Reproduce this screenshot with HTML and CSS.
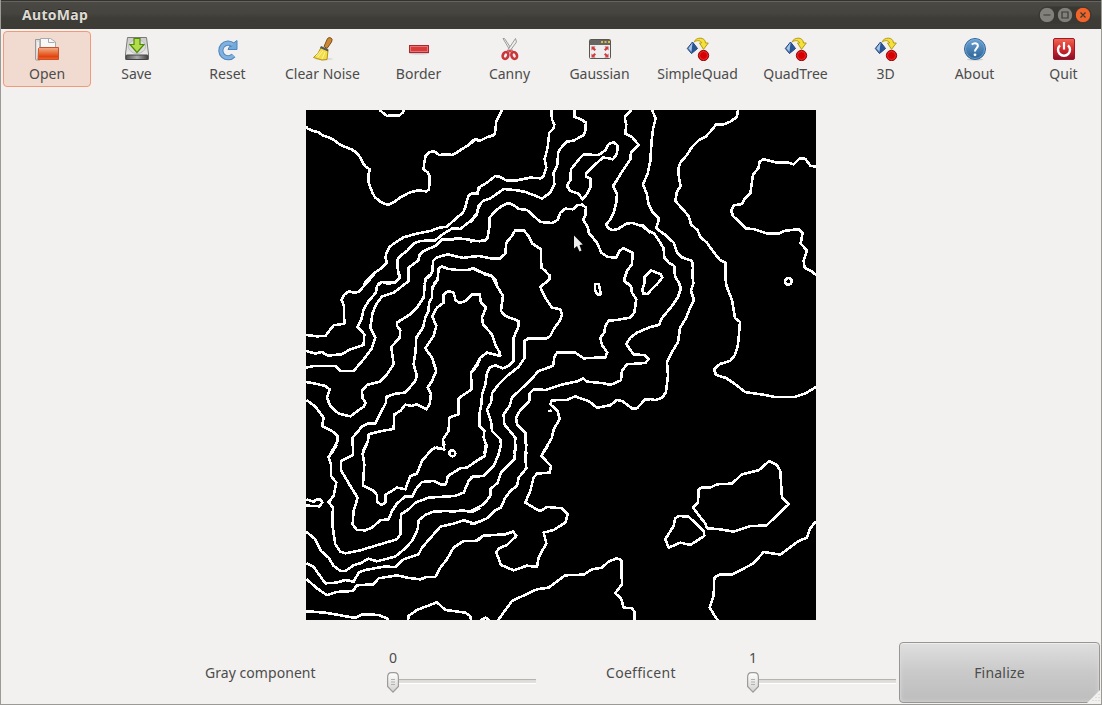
FILE: index.html
```html
<!DOCTYPE html>
<html lang="en">
<head>
<meta charset="utf-8">
<title>AutoMap</title>
<link rel="stylesheet" href="styles.css">
</head>
<body>
<svg class="defs" aria-hidden="true">
  <defs>
    <linearGradient id="orange" x1="0" y1="0" x2="0" y2="1"><stop offset="0" stop-color="#f2b08c"/><stop offset=".45" stop-color="#e9703c"/><stop offset=".75" stop-color="#e2430f"/><stop offset="1" stop-color="#f0672e"/></linearGradient>
    <linearGradient id="steel" x1="0" y1="0" x2="0" y2="1"><stop offset="0" stop-color="#c9cac7"/><stop offset="1" stop-color="#f4f4f2"/></linearGradient>
    <linearGradient id="dark" x1="0" y1="0" x2="1" y2="0"><stop offset="0" stop-color="#555"/><stop offset=".5" stop-color="#aaa"/><stop offset="1" stop-color="#444"/></linearGradient>
    <linearGradient id="blue" x1="0" y1="0" x2="0" y2="1"><stop offset="0" stop-color="#6fa3d4"/><stop offset="1" stop-color="#296396"/></linearGradient>
    <linearGradient id="red" x1="0" y1="0" x2="0" y2="1"><stop offset="0" stop-color="#ee6a55"/><stop offset=".5" stop-color="#d6282c"/><stop offset="1" stop-color="#83102c"/></linearGradient>
    <linearGradient id="knob" x1="0" y1="0" x2="0" y2="1"><stop offset="0" stop-color="#fff"/><stop offset="1" stop-color="#d2d1cf"/></linearGradient>
    <symbol id="shapes" viewBox="0 0 24 24">
      <path d="M6.500 5 1.300 11.500 5.500 16.500 11.500 11.500z" fill="#5f8cc4" stroke="#1f3c6e"/>
      <path d="M6.500 5 5.500 16.500 11.500 11.500z" fill="#2a5594"/>
      <path d="M6.500 5.600 2.600 11.200 5.300 14.500z" fill="#a9c6e6"/>
      <path d="M8.300 4.800C9.500.300 19.200-.800 19.500 6H22.300L17.500 12.300 13.500 6H15.600C15 3.300 11 3 8.300 4.800z" fill="#f5e13c" stroke="#b79a0a"/>
      <circle cx="17.500" cy="18.500" r="5.200" fill="#d80000" stroke="#8c1010"/>
      <circle cx="17.500" cy="18.500" r="4" fill="none" stroke="#f04a4a" stroke-width=".6"/>
    </symbol>
    <symbol id="handle" viewBox="0 0 12 21">
      <path d="M.6 5.500Q.6.700 4.500.700H7.500Q11.400.700 11.400 5.500V14.500L6 20.100.6 14.500z" fill="url(#knob)" stroke="#9c9b98" stroke-width="1.200"/>
      <path d="M4 7.500H8M4 10H8M4 12.500H8" stroke="#b2b1af"/>
    </symbol>
  </defs>
</svg>
<div class="window">
  <header class="titlebar">
    <span class="title">AutoMap</span>
    <svg class="controls" width="54" height="18" viewBox="0 0 54 18">
      <rect x=".5" y=".5" width="53" height="17" rx="8.500" fill="#393833"/>
      <g stroke="#2e2d29" stroke-width=".8"><circle cx="9" cy="9" r="7.700" fill="#81807a"/><circle cx="27" cy="9" r="7.700" fill="#81807a"/><circle cx="45" cy="9" r="7.700" fill="#f1652b"/></g>
      <path d="M5.500 9H12.500M24 6H30V12H24zM42.500 6.500 47.500 11.500M47.500 6.500 42.500 11.500" fill="none" stroke="#3a3934" stroke-width="1.200"/>
    </svg>
  </header>
  <nav class="toolbar">
    <button class="tool active">
      <svg class="icon" viewBox="0 0 24 24"><path d="M.5 2.500H5V23H1.500Q.5 23 .5 22z" fill="#ddd" stroke="#999"/><path d="M5.500 1.500H15.500L20.500 5V15H5.500z" fill="#f8f8f8" stroke="#aaa"/><path d="M13.500 1.500V5.500H19.500" fill="none" stroke="#aaa"/><path d="M3 5V21" stroke="#fff"/><path d="M3.500 11.500 4.500 10.500H23.500V22.500H3z" fill="url(#orange)" stroke="#c8522a"/></svg>
      <span>Open</span></button>
    <button class="tool">
      <svg class="icon" viewBox="0 0 24 24"><path d="M2.500.500H21.500L23.500 17V22.500H.500V17z" fill="url(#steel)" stroke="#7a7b78"/><ellipse cx="12" cy="9.500" rx="8.500" ry="7" fill="#ddd" stroke="#bbb"/><rect x="1" y="18" width="22" height="4.500" rx="1" fill="url(#dark)" stroke="#444"/><path d="M9 1.500H15V7.500H19L12 15.500 5 7.500H9z" fill="#b2dc4c" stroke="#4e8a06" stroke-width="1.200"/></svg>
      <span>Save</span></button>
    <button class="tool">
      <svg class="icon" viewBox="0 0 24 24"><path d="M17.500 18.400A7.300 7.300 0 1 1 17 8" fill="none" stroke="#4b86c0" stroke-width="5.200"/><path d="M21 3.500V12.500H12L13.500 9.500H15.500L17.500 6z" fill="#75a9da" stroke="#4b86c0"/><path d="M17.500 18.400A7.300 7.300 0 1 1 17 8" fill="none" stroke="#82b1de" stroke-width="3.200"/></svg>
      <span>Reset</span></button>
    <button class="tool">
      <svg class="icon" viewBox="0 0 24 24"><ellipse cx="13" cy="22" rx="9" ry="1.500" fill="#ddd"/><path d="M13 9.500 16.500 1.500Q18 0 20 1T20.500 5L16 11.500z" fill="#c88836" stroke="#82500f"/><path d="M10 10.500 17 13.500 16 22.500 11 23 2.500 20.500Q8 16.500 10 10.500z" fill="#f1dc49" stroke="#b49311"/><path d="M12 14 6.500 20.500M14 15 11 22M9.500 14 5 19" stroke="#fff59a"/><path d="M10 9 17.500 12.500 17 14.500 9 11z" fill="#555"/></svg>
      <span>Clear Noise</span></button>
    <button class="tool">
      <svg class="icon" viewBox="0 0 24 24"><ellipse cx="12" cy="16.500" rx="10" ry="1" fill="#ccc"/><rect x="2.500" y="8.500" width="19" height="7" fill="#d93a3a" stroke="#ab2730"/><rect x="3.500" y="9.500" width="17" height="5" fill="none" stroke="#e77474"/></svg>
      <span>Border</span></button>
    <button class="tool">
      <svg class="icon" viewBox="0 0 24 24"><path d="M5 1.500 6.500 1.500 15.500 15 13.500 16z" fill="#eee" stroke="#888" stroke-width=".8"/><path d="M17.500 1.500 18.500 5 10.500 16 8.500 15z" fill="#eee" stroke="#888" stroke-width=".8"/><g fill="none" stroke="#c9353a" stroke-width="2.600"><ellipse cx="7.500" cy="18.500" rx="2.700" ry="3.500" transform="rotate(25 7.500 18.500)"/><ellipse cx="16.200" cy="18.500" rx="2.700" ry="3.500" transform="rotate(-25 16.200 18.500)"/></g><path d="M8.500 14 12 12.500 15 14 12 15.500z" fill="#d8474a"/></svg>
      <span>Canny</span></button>
    <button class="tool">
      <svg class="icon" viewBox="0 0 24 24"><rect x="1.500" y="2.500" width="21" height="19" rx="1" fill="#eee" stroke="#555753"/><path d="M2 3H22V8H2z" fill="#666762"/><path d="M13 4H15V6H13zM16.500 4H18.500V6H16.500zM20 4H22V6H20z" fill="#e8b63c"/><path d="M3.500 9.500H7.500L6.300 10.700 8 12.500 6.500 14 4.700 12.200 3.500 13.500zM20.500 9.500H16.500L17.700 10.700 16 12.500 17.500 14 19.300 12.200 20.500 13.500zM3.500 20.500H7.500L6.300 19.300 8 17.500 6.500 16 4.700 17.800 3.500 16.500zM20.500 20.500H16.500L17.700 19.300 16 17.500 17.500 16 19.300 17.800 20.500 16.500z" fill="#cf3d40"/></svg>
      <span>Gaussian</span></button>
    <button class="tool"><svg class="icon"><use href="#shapes"/></svg><span>SimpleQuad</span></button>
    <button class="tool"><svg class="icon"><use href="#shapes"/></svg><span>QuadTree</span></button>
    <button class="tool"><svg class="icon"><use href="#shapes"/></svg><span>3D</span></button>
    <button class="tool">
      <svg class="icon" viewBox="0 0 24 24"><ellipse cx="12" cy="22.500" rx="8" ry="1" fill="#ccc"/><circle cx="12" cy="12" r="10.500" fill="url(#blue)" stroke="#2d679c"/><circle cx="12" cy="12" r="9.500" fill="none" stroke="#7fb0dc" stroke-width=".7"/><path d="M8.700 7.500Q12 5 14.500 7.300C16.500 10 12 11.500 12 14.500" fill="none" stroke="#fff" stroke-width="2"/><circle cx="12" cy="17.800" r="1.400" fill="#fff"/></svg>
      <span>About</span></button>
    <button class="tool">
      <svg class="icon" viewBox="0 0 24 24"><rect x="1.500" y="1.500" width="21" height="21" rx="1.500" fill="url(#red)" stroke="#a51627"/><path d="M8 8.300A6 6 0 1 0 16 8.300" fill="none" stroke="#fff" stroke-width="2.400"/><path d="M12 5V12.500" stroke="#fff" stroke-width="2.200"/></svg>
      <span>Quit</span></button>
  </nav>
  <main class="stage">
    <svg class="map" width="510" height="510" viewBox="306 110 510 510">
      <rect x="306" y="110" width="510" height="510" fill="#000"/>
      <g class="contours">
        <g transform="translate(300.300 104.300) scale(.33333)">
          <path d="M238 17 250 27 260 35 272 33 298 33 307 25 312 17"/>
          <path d="M18 66 22 73 38 80 55 84 68 94 85 99 102 108 120 122 140 130 155 136 170 146 180 160 187 175 195 186 208 195 205 210 205 235 211 252 217 266 224 279 240 292 262 302 280 294 300 279 325 266 352 258 378 261 386 255 387 240 387 212 382 204 370 196 371 180 376 155 388 143 402 141 416 152 440 150 455 152 468 146 482 136 505 122 520 107 530 105 540 110"/>
          <path d="M540 248 534 258 530 268 516 266 505 274 500 290 495 310 488 325 470 340 440 367 418 370 390 380 350 388 310 399 280 418 266 430 259 445 255 460 260 475 245 490 220 508 190 540"/>
          <path d="M540 300 532 315 530 328 510 350 480 374 457 372 430 388 405 408 360 410 340 418 322 438 300 455 292 465 292 490 297 522 285 535 262 538 245 533 230 540"/>
          <path d="M540 411 520 409 500 405 468 402 455 406 425 406 405 425 370 440 358 452 354 468 325 490 325 530"/>
          <path d="M540 455 515 457 490 461 470 457 443 450 410 459 398 470 397 500 390 515 378 522 373 540"/>
          <path d="M540 503 520 493 500 497 470 497 445 494 425 487 415 492 412 525 400 540"/>
        </g>
        <g transform="translate(470.300 104.300) scale(.33333)">
          <path d="M95 17 85 38 78 50 75 80 72 92 50 99 30 109 15 107 0 118"/>
          <path d="M243 17 245 45 252 60 250 72 237 85 232 130 227 150 223 165 228 190 220 215 212 222 180 220 140 228 107 228 90 218 75 215 50 235 25 250 22 268 0 270"/>
          <path d="M312 17 313 38 330 44 347 55 345 80 340 92 310 109 290 112 270 133 263 145 262 180 250 205 252 240 240 265 215 283 200 276 165 263 140 258 100 254 75 272 60 282 38 290 25 305 20 330 0 355"/>
          <path d="M430 113 442 124 440 148 428 165 415 162 398 160 375 180 347 208 348 218 360 222 360 250 348 272 336 285 325 268 300 260 290 245 300 228 302 195 330 160 340 151 385 152 405 138 415 120z"/>
          <path d="M485 17 465 35 464 45 468 60 465 88 485 98 505 122 482 145 480 165 450 210 440 228 428 245 440 270 438 295 430 325 422 343 408 360 412 370 428 378 445 373 468 358 485 356 515 365 540 385"/>
          <path d="M460 88H468"/>
          <path d="M0 411 45 409 52 400 57 370 58 340 75 320 95 305 113 296 130 302 145 314 170 317 190 335 210 353 245 356 262 347 270 325 285 313 308 315 320 303 335 301 347 310 345 335 338 345 353 370 355 385 380 415 393 445 412 458 438 460 447 440 460 432 487 445 485 480 470 500 462 525 470 540"/>
          <path d="M0 458 25 455 60 462 90 462 105 448 108 415 125 395 135 378 160 378 175 395 185 417 212 435 213 490 225 500 238 515 236 528"/>
          <path d="M0 494 10 492 35 505 65 515 75 525 80 540"/>
        </g>
        <g transform="translate(640.300 104.300) scale(.33333)">
          <path d="M35 17 46 42 38 75 34 110 30 170 22 208 8 240 20 270 25 300 38 325 56 343 48 372 75 392 100 415 110 445 125 459 155 470 158 490 156 515 160 540"/>
          <path d="M0 363 8 364 25 380 42 388 60 415 70 432 72 460 85 475 102 485 104 515 118 540"/>
          <path d="M293 17 290 38 270 52 250 60 228 60 212 80 195 98 175 108 155 128 140 152 120 175 114 192 116 220 121 245 110 262 105 290 125 312 145 335 152 360 172 378 180 398 200 415 215 437 238 466 256 475 256 520 257 540"/>
          <path d="M528 188 510 184 495 164 480 161 460 180 440 174 405 174 370 165 358 172 355 190 338 212 334 240 330 268 313 283 305 299 280 303 273 320 278 335 300 355 318 373 340 374 380 388 415 388 435 379 475 375 487 385 481 418 500 438 490 470 493 490 515 502 528 513"/>
          <circle cx="444" cy="531" r="10"/>
          <path d="M32 498 12 518 12 538 6 555 9 568 22 569 34 555 50 540 66 520 62 510z"/>
        </g>
        <g transform="translate(300.300 274.300) scale(.33333)">
          <path d="M222 0 175 53 160 55 145 51 130 63 124 77 131 95 132 148 100 153 75 185 50 186 18 182"/>
          <path d="M298 0 298 10 285 25 245 23 230 35 227 55 205 80 190 105 183 135 172 158 192 180 190 212 150 225 125 240 82 244 65 233 45 238 18 230"/>
          <path d="M326 0 326 20 280 55 245 67 228 90 217 115 210 160 225 190 213 225 190 255 160 290 120 290 105 275 40 275 18 280"/>
          <path d="M390 0 375 15 370 70 350 100 330 120 290 145 290 155 300 168 298 190 273 218 280 270 260 300 240 322 200 332 185 350 187 372 196 385 190 397 150 426 115 418 90 395 80 370 88 345 75 335 45 328 18 323"/>
          <path d="M413 0 413 15 396 40 395 70 386 85 385 110 375 130 368 160 348 190 346 230 340 270 350 305 345 320 315 355 285 358 258 368 257 385 225 448 205 447 185 457 157 490 158 540"/>
          <path d="M540 62 515 60 495 80 478 86 466 78 460 55 445 50 430 60 430 85 410 100 396 125 408 155 400 185 375 222 395 250 408 290 395 320 382 340 392 360 388 390 378 405 350 390 335 395 315 391 300 410 282 420 280 464 245 470 205 480 203 500 190 525 188 540"/>
          <path d="M18 377 45 397 70 430 65 455 95 470 112 485 112 500 90 540"/>
          <path d="M540 250 530 270 512 295 514 345 475 372 475 420 447 430 445 470 428 495 432 525 400 520"/>
        </g>
        <g transform="translate(470.300 274.300) scale(.33333)">
          <path d="M42 0 65 5 80 35 98 65 92 110 105 125 145 140 145 155 130 190 130 260 115 275 98 282 75 273 60 278 50 295 45 330 35 360 34 385 27 420 27 455 42 470 40 490 47 510 42 540"/>
          <path d="M0 62 28 60 32 85 47 100 35 130 38 150 65 180 75 210 88 235 90 245 50 235 30 250 20 275 0 298"/>
          <path d="M238 0 238 15 210 38 215 50 228 75 245 100 270 105 275 120 270 137 250 165 240 185 228 193 175 192 163 200 163 250 145 278 110 305 85 330 66 355 62 385 50 405 62 440 65 470 90 495 92 510 85 540"/>
          <path d="M465 0 462 20 482 35 485 55 498 75 492 115 480 130 440 137 415 139 405 155 402 175 390 190 395 212 411 235 405 249 340 252 315 235 260 235 252 250 248 275 205 290 180 318 125 370 118 395 100 420 102 450 135 490 133 540"/>
          <path d="M540 158 500 175 480 190 468 210 490 240 525 243 535 255 525 266 470 270 455 290 452 318 420 332 400 327 350 322 338 312 325 320 270 332 225 347 190 345 178 358 177 380 150 408 137 430 140 450 165 475 168 540"/>
          <path d="M540 375 525 375 500 402 485 402 455 380 440 377 420 393 380 400 355 380 330 372 315 366 290 377 245 378 240 390 262 410 268 435 250 465 245 490 215 540"/>
          <path d="M234 410H246M238 407H243"/>
          <path d="M374 30 385 29 392 60 380 60 374 48z"/>
        </g>
        <path d="M693 284 691 291 694 300 690 308 686 318 680 328 678 342 672 352 667 362 668 375 666 392 662 398 655 400 650 399"/>
        <path d="M679 284 681 288 678 297 672 306 662 318 659 325 650 327"/>
        <path d="M726 284 728 290 732 300 735 318 740 322 738 345 735 355 730 361 720 364 714 369 716 375 726 378 735 384 745 392 765 395 775 397 795 397 806 393 816 387"/>
        <g transform="translate(300.300 444.300) scale(.33333)">
          <path d="M110 0 95 25 85 38 92 60 92 95 108 115 100 155 85 173 98 190 96 240 105 300 120 322 135 327 180 318 240 300 290 285 300 270 302 210 325 195 345 175 385 160 465 155 490 145 505 110 520 97 540 95"/>
          <path d="M158 0 158 32 122 50 122 78 150 125 172 160 160 200 157 240 170 257 195 258 215 250 240 228 265 225 275 200 290 178 315 156 335 157 350 130 365 113 400 110 420 120 437 120 443 95 480 72 500 70 540 42"/>
          <path d="M200 0 187 28 192 60 188 123 220 140 230 152 230 172 243 182 255 175 255 152 290 130 315 135 330 95 350 88 365 50 395 15 410 10 430 15 432 0"/>
          <circle cx="456" cy="27" r="9"/>
          <path d="M18 165 40 172 50 165 60 166 66 174 58 186 18 184"/>
          <path d="M18 262 45 285 62 320 85 340 100 365 120 380 135 380 160 363 180 357 205 343 230 351 285 337 315 312 335 290 352 255 355 228 375 212 400 202 440 200 460 202 485 198 515 203 540 190"/>
          <path d="M18 356 40 368 75 417 110 415 135 407 160 412 175 385 195 377 250 367 285 368 310 345 355 330 365 310 400 270 420 247 460 238 490 228 520 237 540 232"/>
          <path d="M18 404 50 432 80 453 110 443 158 440 170 423 220 420 235 402 290 393 320 400 360 405 380 398 405 398 420 370 440 345 460 310 490 290 530 290 540 282"/>
          <path d="M18 501 75 505 165 521 185 510 235 512 262 523 262 528"/>
          <path d="M323 528 325 515 350 497 410 474 435 497 495 505 510 515 512 528"/>
        </g>
        <g transform="translate(470.300 444.300) scale(.33333)">
          <path d="M50 0 43 35 0 63"/>
          <path d="M92 0 85 30 70 65 40 95 0 98"/>
          <path d="M137 0 132 45 92 85 82 115 60 135 60 155 40 180 0 202"/>
          <path d="M168 0 165 40 168 72 145 100 140 125 120 140 105 160 92 190 75 198 50 222 15 237 0 237"/>
          <path d="M235 0 213 35 242 65 238 85 200 88 190 100 180 140 165 175 190 190 210 200 230 188 275 192 292 210 285 235 250 257 220 265 228 297 205 340 200 368 170 364 130 378 92 362 78 325 85 313 110 302 138 275 128 262 105 270 40 274 15 290 0 290"/>
          <path d="M83 528 125 470 200 435 235 430 285 393 340 391 365 375 395 370 415 352 440 342 453 348 455 420 435 447 452 462 460 490 485 492 492 502 492 528"/>
          <path d="M32 528 45 520 58 528"/>
          <path d="M897 50 920 62 930 80 935 160 955 180 888 244 840 245 790 262 750 255 710 252 705 238 668 190 683 175 685 135 695 129 720 130 740 120 785 118 815 90 865 78z"/>
          <path d="M625 215 655 217 700 260 702 275 660 302 630 295 595 310 585 285 610 245 615 222z"/>
          <path d="M742 528 718 490 730 455 732 400 750 390 785 391 850 357 880 323 930 331 985 290 1010 280 1018 255 1037 230"/>
        </g>
      </g>
      <path d="M574 235.500V248.500L577 246 579.500 251.500 581.500 250.500 579.500 245 582.800 244.500z" fill="#eee"/>
    </svg>
  </main>
  <footer class="panel">
    <span class="label">Gray component</span>
    <div class="slider"><span class="value">0</span><div class="track"><svg class="knob"><use href="#handle"/></svg></div></div>
    <span class="label second">Coefficent</span>
    <div class="slider"><span class="value">1</span><div class="track"><svg class="knob"><use href="#handle"/></svg></div></div>
    <button class="finalize">Finalize</button>
  </footer>
  <svg class="grip" width="15" height="15" viewBox="0 0 15 15"><path d="M15 0V15H0z" fill="#f2f1f0"/><path d="M13 5V14M10 8V14M7 11V14" stroke="#c9c8c6" stroke-dasharray="1 2"/></svg>
</div>
</body>
</html>
```
FILE: styles.css
```css
* { box-sizing: border-box; }
body {
  margin: 0;
  background: #3c3b37;
  font: 14px "Noto Sans", "Open Sans", sans-serif;
  color: #4c4c4c;
}
.defs { position: absolute; width: 0; height: 0; }
.window {
  position: relative;
  display: flex;
  flex-direction: column;
  width: 1102px;
  height: 705px;
  overflow: hidden;
  background: #f2f1ef;
  border: solid #9b9a97;
  border-width: 0 1px 1px;
}
.titlebar {
  display: flex;
  align-items: center;
  justify-content: space-between;
  flex: none;
  height: 29px;
  margin: 0 -1px;
  padding: 0 9px 0 22px;
  border-top: 1px solid #33322e;
  box-shadow: inset 0 1px #65645e;
  background: linear-gradient(#4a4943, #45443f 45%, #3d3c37 60%, #3c3b36);
}
.title { padding-bottom: 2px; color: #dfdbd2; font-weight: 700; font-size: 14px; letter-spacing: .3px; text-shadow: 0 -1px #222; }
.controls { display: block; margin-right: 1px; }
.toolbar {
  display: grid;
  grid-template-columns: 89px 89px 93px 97px 95px 87px 93px 103px 93px 87px 91px 87px;
  flex: none;
  height: 58px;
  margin: 2px 0 0 2px;
}
.tool {
  display: flex;
  flex-direction: column;
  align-items: center;
  height: 56px;
  margin: 0;
  padding: 5px 0 0;
  border: 1px solid transparent;
  border-radius: 4px;
  background: none;
  font: inherit;
  color: inherit;
  line-height: 20px;
  white-space: nowrap;
}
.tool.active { width: 88px; background: #f1dad0; border-color: #f19a78; }
.icon { width: 24px; height: 24px; margin-bottom: 3px; }
.stage { display: flex; flex: none; padding: 21px 0 0 305px; height: 531px; }
.map { display: block; }
.contours { fill: none; stroke: #fff; stroke-width: 2.600px; shape-rendering: crispEdges; stroke-linejoin: round; }
.contours g { stroke-width: 7.800px; }
.panel {
  display: grid;
  grid-template-columns: 182px 218px 142px 152px 201px;
  align-items: center;
  flex: none;
  height: 62px;
  margin: 22px 0 0 204px;
}
.label { padding-bottom: 2px; letter-spacing: .05px; }
.label.second { padding-left: 1px; letter-spacing: .3px; }
.slider { display: flex; flex-direction: column; height: 62px; padding-top: 6px; }
.value { width: 12px; text-align: center; line-height: 20px; }
.track {
  width: 149px;
  height: 21px;
  margin-top: 4px;
  background: linear-gradient(#b5b3b0 1px, #dddbd8 1px, #e2e0dd 4px, #fff 4px) 0 7px / 100% 5px no-repeat;
}
.knob { display: block; width: 12px; height: 21px; }
.finalize {
  align-self: start;
  width: 201px;
  height: 61px;
  margin: 0;
  border: 1px solid #979694;
  border-radius: 4px;
  background: linear-gradient(#dfdfdf, #c9c9c9 50%, #bdbdbd);
  box-shadow: inset 0 1px 1px #efefef, inset 0 0 4px #dcdcdc;
  font: inherit;
  color: inherit;
  letter-spacing: .2px;
}
.grip { position: absolute; right: 0; bottom: 0; }
```
